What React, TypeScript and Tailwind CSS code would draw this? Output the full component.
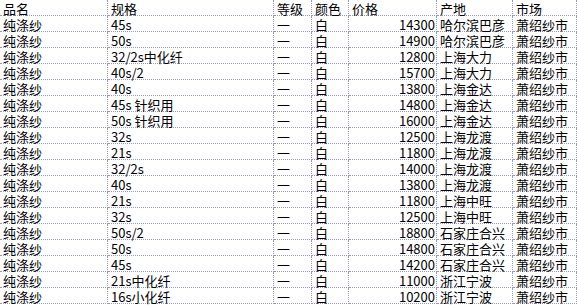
import React from "react";

const rows: [string, string, string, string, string, string, string][] = [
  ["品名", "规格", "等级", "颜色", "价格", "产地", "市场"],
  ["纯涤纱", "45s", "一", "白", "14300", "哈尔滨巴彦", "萧绍纱市"],
  ["纯涤纱", "50s", "一", "白", "14900", "哈尔滨巴彦", "萧绍纱市"],
  ["纯涤纱", "32/2s中化纤", "一", "白", "12800", "上海大力", "萧绍纱市"],
  ["纯涤纱", "40s/2", "一", "白", "15700", "上海大力", "萧绍纱市"],
  ["纯涤纱", "40s", "一", "白", "13800", "上海金达", "萧绍纱市"],
  ["纯涤纱", "45s 针织用", "一", "白", "14800", "上海金达", "萧绍纱市"],
  ["纯涤纱", "50s 针织用", "一", "白", "16000", "上海金达", "萧绍纱市"],
  ["纯涤纱", "32s", "一", "白", "12500", "上海龙渡", "萧绍纱市"],
  ["纯涤纱", "21s", "一", "白", "11800", "上海龙渡", "萧绍纱市"],
  ["纯涤纱", "32/2s", "一", "白", "14000", "上海龙渡", "萧绍纱市"],
  ["纯涤纱", "40s", "一", "白", "13800", "上海龙渡", "萧绍纱市"],
  ["纯涤纱", "21s", "一", "白", "11800", "上海中旺", "萧绍纱市"],
  ["纯涤纱", "32s", "一", "白", "12500", "上海中旺", "萧绍纱市"],
  ["纯涤纱", "50s/2", "一", "白", "18800", "石家庄合兴", "萧绍纱市"],
  ["纯涤纱", "50s", "一", "白", "14800", "石家庄合兴", "萧绍纱市"],
  ["纯涤纱", "45s", "一", "白", "14200", "石家庄合兴", "萧绍纱市"],
  ["纯涤纱", "21s中化纤", "一", "白", "11000", "浙江宁波", "萧绍纱市"],
  ["纯涤纱", "16s小化纤", "一", "白", "10200", "浙江宁波", "萧绍纱市"],
];

export default function App() {
  return (
    <div
      className="w-[577px] h-[305px] bg-white text-black overflow-hidden"
      style={{ fontFamily: "'Noto Sans CJK SC', 'Noto Sans', sans-serif" }}
    >
      <div className="grid grid-cols-[108px_166px_38px_37px_88px_76px_64px] text-[13px] leading-[15px]">
        {rows.map((r, i) =>
          r.map((c, j) => (
            <div
              key={`${i}-${j}`}
              className={
                "h-[16px] pt-[1px] border-r border-b border-dotted border-[#9898c0] whitespace-pre " +
                (j === 4 && i > 0 ? "text-right pr-[1px]" : "pl-[3px]")
              }
            >
              {c}
            </div>
          ))
        )}
      </div>
    </div>
  );
}
